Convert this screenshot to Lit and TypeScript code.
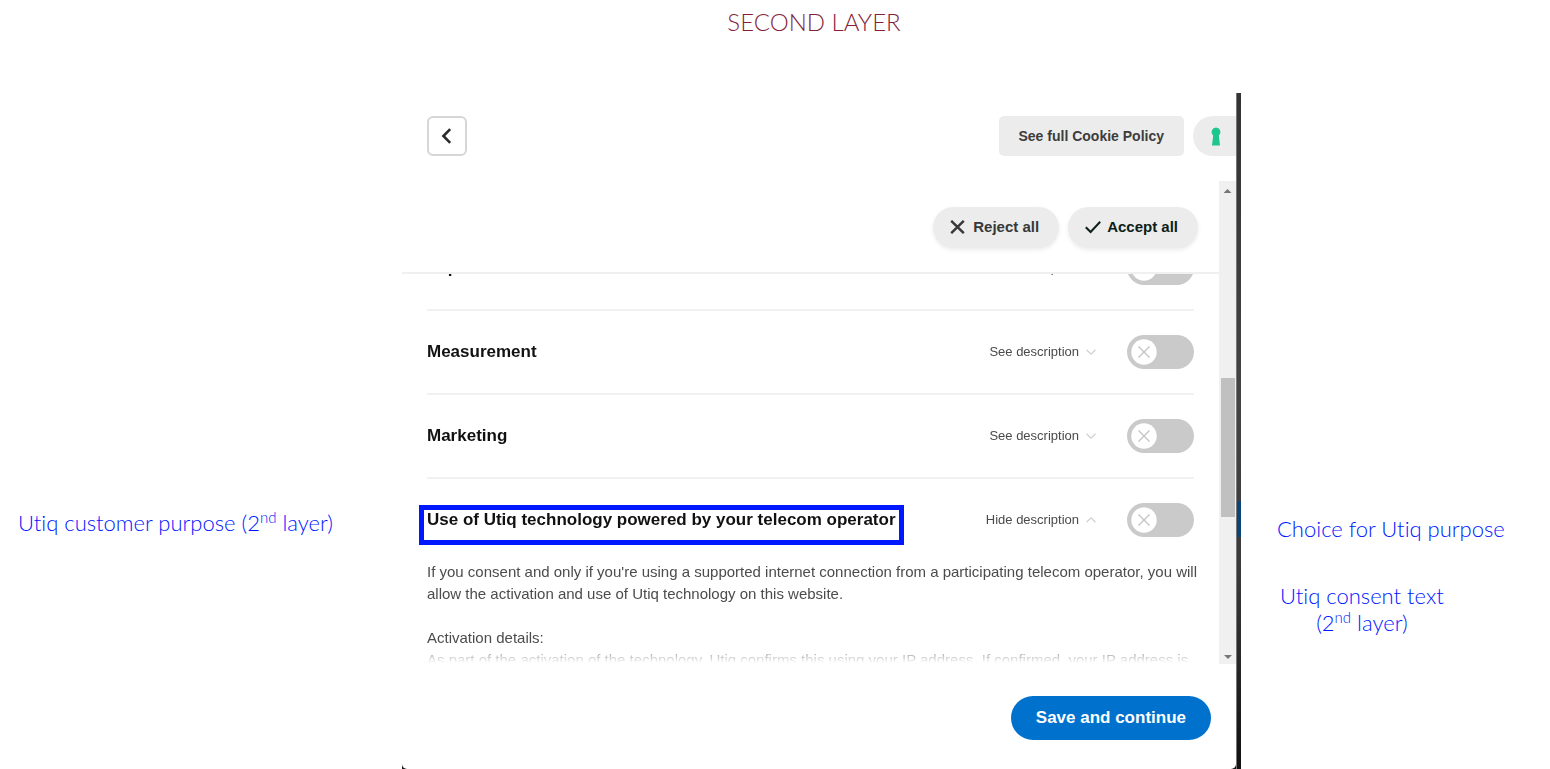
import { LitElement, html, css, svg, nothing } from "lit";
import { customElement, property, state } from "lit/decorators.js";

interface Purpose {
  id: string;
  title: string;
  open?: boolean;
  marked?: boolean;
}

@customElement("purpose-row")
class PurposeRow extends LitElement {
  @property({ attribute: false }) purpose!: Purpose;
  @state() private on = false;

  static styles = css`
    :host {
      display: block;
    }
    .row {
      display: flex;
      align-items: center;
      height: 82px;
    }
    .title {
      position: relative;
      margin: 0;
      font-size: 17px;
      line-height: 20px;
      font-weight: 700;
      color: #111;
    }
    .marked::after {
      content: "";
      position: absolute;
      inset: -5px -8px -15px -8px;
      border: 5px solid #0018ff;
      pointer-events: none;
    }
    .more {
      display: flex;
      align-items: center;
      gap: 7px;
      margin-left: auto;
      margin-right: 31px;
      padding: 0;
      border: 0;
      background: none;
      font: 13px/20px "Liberation Sans", Arial, sans-serif;
      color: #4a4a4a;
      cursor: pointer;
    }
    .chevron {
      width: 10px;
      height: 6px;
      fill: none;
      stroke: #cfcfcf;
      stroke-width: 1.2;
    }
    .toggle {
      display: grid;
      width: 67px;
      height: 34px;
      cursor: pointer;
    }
    .toggle > * {
      grid-area: 1 / 1;
    }
    .switch {
      appearance: none;
      margin: 0;
      border-radius: 17px;
      background: #cacaca;
    }
    .knob {
      width: 26px;
      height: 26px;
      margin: 4px;
      pointer-events: none;
    }
    .on {
      justify-self: end;
    }
  `;

  render() {
    const { id, title, open, marked } = this.purpose;
    return html`
      <div class="row">
        <h2 class="title ${marked ? "marked" : ""}" id="title-${id}">${title}</h2>
        <button class="more" type="button" aria-expanded=${open ? "true" : "false"}>
          ${open ? "Hide" : "See"} description
          <svg class="chevron" viewBox="0 0 10 6" aria-hidden="true">
            ${open ? svg`<path d="M.5 5.3 5 .9l4.5 4.4" />` : svg`<path d="M.5.7 5 5.1 9.5.7" />`}
          </svg>
        </button>
        <label class="toggle">
          <input
            class="switch"
            type="checkbox"
            role="switch"
            aria-labelledby="title-${id}"
            .checked=${this.on}
            @change=${() => (this.on = !this.on)}
          />
          <svg class="knob ${this.on ? "on" : ""}" viewBox="0 0 26 26" aria-hidden="true">
            <circle cx="13" cy="13" r="12.7" fill="#fff" />
            ${this.on
              ? nothing
              : svg`<path d="M7.5 7.5l11 11M18.5 7.5l-11 11" stroke="#c6c6c6" stroke-width="1.4" />`}
          </svg>
        </label>
      </div>
      <slot></slot>
    `;
  }
}

@customElement("consent-panel")
class ConsentPanel extends LitElement {
  private purposes: Purpose[] = [
    { id: "experience", title: "Experience" },
    { id: "measurement", title: "Measurement" },
    { id: "marketing", title: "Marketing" },
    {
      id: "utiq",
      title: "Use of Utiq technology powered by your telecom operator",
      open: true,
      marked: true,
    },
  ];

  static styles = css`
    :host {
      display: flex;
      min-height: 0;
      font-family: "Liberation Sans", Arial, sans-serif;
      background: #1a1a1a;
    }
    .dialog {
      flex: 1;
      min-width: 0;
      display: flex;
      flex-direction: column;
      background: #fff;
      border-radius: 0 0 5px 5px;
    }
    .backdrop {
      width: 5px;
      background: linear-gradient(90deg, #777 0 1px, transparent 1px),
        linear-gradient(transparent 408px, #0b4379 408px 444px, transparent 444px),
        linear-gradient(#333, #444 45%, #3a3a3a 70%, #111);
    }
    .header {
      display: flex;
      align-items: center;
      gap: 9px;
      padding: 23px 0 25px 25px;
    }
    .back {
      display: grid;
      place-items: center;
      width: 40px;
      height: 40px;
      margin-right: auto;
      padding: 0;
      border: 2px solid #d6d6d6;
      border-radius: 6px;
      background: #fff;
    }
    .back svg {
      width: 12px;
      height: 16px;
      margin-right: 3px;
      fill: none;
      stroke: #2c2c2c;
      stroke-width: 2.6;
    }
    .policy {
      height: 40px;
      padding: 0 20px;
      border: 0;
      border-radius: 5px;
      background: #ececec;
      font: 700 14px/20px "Liberation Sans", Arial, sans-serif;
      color: #3c3c3c;
    }
    .brand {
      display: flex;
      align-items: center;
      width: 43px;
      height: 40px;
      padding: 0 0 0 18px;
      border: 0;
      border-radius: 20px 0 0 20px;
      background: #ececec;
      box-sizing: border-box;
    }
    .brand svg {
      width: 10px;
      height: 19px;
    }
    .body {
      flex: 1;
      min-height: 0;
      display: flex;
    }
    .main {
      flex: 1;
      min-width: 0;
      display: flex;
      flex-direction: column;
    }
    .actions {
      display: flex;
      justify-content: flex-end;
      gap: 9px;
      padding: 26px 21px 24px;
      border-bottom: 2px solid #f0f0f0;
    }
    .pill {
      display: flex;
      align-items: center;
      height: 41px;
      padding: 0 20px 2px 17px;
      border: 0;
      border-radius: 21px;
      background: #ececec;
      box-shadow: 0 2px 4px rgba(0, 0, 0, 0.08);
      font: 700 15px/20px "Liberation Sans", Arial, sans-serif;
      color: #383838;
    }
    .reject {
      gap: 8px;
    }
    .accept {
      gap: 6px;
      color: #0c2018;
    }
    .pill svg {
      height: 14px;
      fill: none;
      stroke: currentColor;
      stroke-width: 2.4;
    }
    .reject svg {
      width: 15px;
    }
    .accept svg {
      width: 16px;
      stroke-width: 2;
    }
    .list {
      flex: 1;
      min-height: 0;
      overflow: hidden;
      padding: 0 25px;
      mask-image: linear-gradient(#000 calc(100% - 22px), transparent calc(100% - 1px));
    }
    .scrolled {
      margin-top: -47px;
    }
    purpose-row + purpose-row {
      border-top: 2px solid #f1f1f1;
    }
    .text {
      margin: 0 -8px 22px 0;
      font-size: 15px;
      line-height: 22px;
      color: #4c4c4c;
    }
    .scrollbar {
      display: flex;
      flex-direction: column;
      align-items: center;
      width: 17px;
      background: #f0f0f0;
    }
    .arrow {
      width: 8px;
      height: 4px;
      margin: 8px 0 5px;
      background: #777;
      clip-path: polygon(50% 0, 100% 100%, 0 100%);
    }
    .down {
      transform: rotate(180deg);
    }
    .track {
      flex: 1;
      display: grid;
      grid-template-rows: 179fr 139fr 129fr;
    }
    .thumb {
      grid-row: 2;
      width: 14px;
      background: #c0c0c0;
    }
    .footer {
      display: flex;
      justify-content: flex-end;
      padding: 32px 25px 29px;
    }
    .save {
      height: 44px;
      padding: 0 25px;
      border: 0;
      border-radius: 22px;
      background: #0072ce;
      font: 700 17px/20px "Liberation Sans", Arial, sans-serif;
      color: #fff;
    }
  `;

  render() {
    return html`
      <section class="dialog" aria-label="Cookie choices">
        <header class="header">
          <button class="back" type="button" aria-label="Back">
            <svg viewBox="0 0 12 16" aria-hidden="true"><path d="M10.2 1.2 3.4 8l6.8 6.8" /></svg>
          </button>
          <button class="policy" type="button">See full Cookie Policy</button>
          <button class="brand" type="button" aria-label="Privacy provider">
            <svg viewBox="0 0 10 19" aria-hidden="true">
              <path
                fill="#1dc58f"
                d="M5 .5a4.4 4.4 0 0 1 3.2 7.4c-.4.4-.4.8-.3 1.3L9 18.5H1l1.1-9.3c.1-.5.1-.9-.3-1.3A4.4 4.4 0 0 1 5 .5z"
              />
            </svg>
          </button>
        </header>
        <div class="body">
          <div class="main">
            <div class="actions">
              <button class="pill reject" type="button">
                <svg viewBox="0 0 15 14" aria-hidden="true">
                  <path d="M1.2.8l12.6 12.4M13.8.8 1.2 13.2" />
                </svg>
                Reject all
              </button>
              <button class="pill accept" type="button">
                <svg viewBox="0 0 16 14" aria-hidden="true"><path d="M.8 7.2 5.6 12 15.2 1.8" /></svg>
                Accept all
              </button>
            </div>
            <div class="list">
              <div class="scrolled">
                ${this.purposes.map(
                  (p) => html`<purpose-row .purpose=${p}>
                    ${p.open
                      ? html`<p class="text">
                            If you consent and only if you're using a supported internet connection
                            from a participating telecom operator, you will allow the activation and
                            use of Utiq technology on this website.
                          </p>
                          <p class="text">
                            Activation details:<br />As part of the activation of the technology,
                            Utiq confirms this using your IP address. If confirmed, your IP address
                            is
                          </p>`
                      : nothing}
                  </purpose-row>`
                )}
              </div>
            </div>
          </div>
          <div class="scrollbar" aria-hidden="true">
            <span class="arrow"></span>
            <span class="track"><span class="thumb"></span></span>
            <span class="arrow down"></span>
          </div>
        </div>
        <footer class="footer">
          <button class="save" type="button">Save and continue</button>
        </footer>
      </section>
      <div class="backdrop"></div>
    `;
  }
}

@customElement("app-root")
class AppRoot extends LitElement {
  static styles = css`
    :host {
      display: flex;
      flex-direction: column;
      height: 100vh;
      background: #fff;
      font-family: Lato, sans-serif;
      font-weight: 300;
      font-variant-ligatures: none;
    }
    .heading {
      margin: 0;
      padding: 8px 0 57px 78px;
      font-size: 24px;
      line-height: 28px;
      font-weight: 300;
      text-align: center;
      color: #851f3c;
    }
    .stage {
      flex: 1;
      min-height: 0;
      display: grid;
      grid-template-columns: 402fr 839fr 309fr;
      grid-template-rows: minmax(0, 1fr);
    }
    .note {
      margin: 0;
      font-size: 22px;
      line-height: 27px;
      color: #0018ff;
    }
    .note sup {
      font-size: 15px;
      line-height: 0;
    }
    .left {
      padding: 416px 0 0 18px;
    }
    .right {
      display: flex;
      flex-direction: column;
      align-items: flex-start;
      gap: 40px;
      padding: 422px 0 0 36px;
    }
    .centered {
      padding-left: 3px;
      text-align: center;
    }
  `;

  render() {
    return html`
      <h1 class="heading">SECOND LAYER</h1>
      <main class="stage">
        <aside class="left">
          <p class="note">Utiq customer purpose (2<sup>nd</sup> layer)</p>
        </aside>
        <consent-panel></consent-panel>
        <aside class="right">
          <p class="note">Choice for Utiq purpose</p>
          <p class="note centered">Utiq consent text<br />(2<sup>nd</sup> layer)</p>
        </aside>
      </main>
    `;
  }
}
